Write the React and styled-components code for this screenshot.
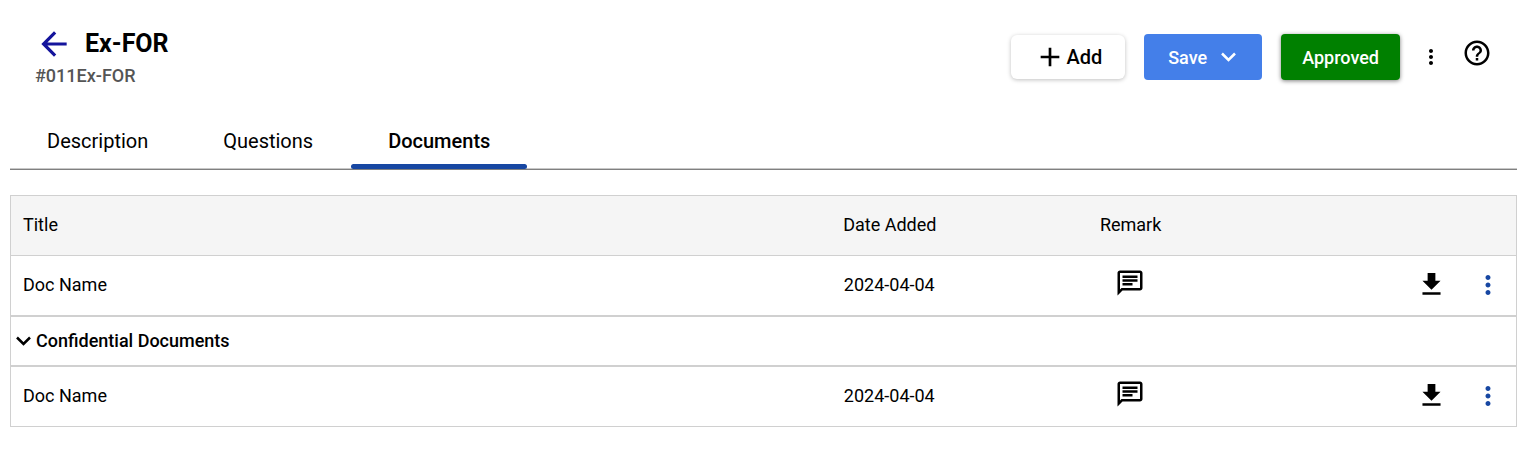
import { useState } from "react";
import styled, { createGlobalStyle } from "styled-components";
import {
  MdAdd,
  MdArrowBack,
  MdDownload,
  MdHelpOutline,
  MdMoreVert,
  MdOutlineChat,
} from "react-icons/md";

const GlobalStyle = createGlobalStyle`
  * {
    box-sizing: border-box;
  }
  body {
    margin: 0;
    background-color: #fff;
    color: #000;
    font-family: Roboto, "Liberation Sans", sans-serif;
  }
  button {
    font-family: inherit;
    color: inherit;
    cursor: pointer;
  }
`;

const Page = styled.main`
  padding: 25px 9px 0 10px;
`;

const Header = styled.header`
  display: flex;
  justify-content: space-between;
  align-items: flex-start;
  padding: 0 25px;
`;

const TitleRow = styled.div`
  display: flex;
  align-items: center;
  gap: 12px;
`;

const Title = styled.h1`
  margin: 0;
  font-size: 25px;
  font-weight: 700;
  line-height: 36px;
`;

const Code = styled.p`
  margin: 3px 0 0;
  color: #555;
  font-size: 18px;
  font-weight: 500;
  line-height: 20px;
`;

const IconButton = styled.button`
  display: inline-flex;
  align-items: center;
  justify-content: center;
  border: none;
  padding: 0;
  background: none;
  color: ${({ $color }) => $color || "#000"};
  font-size: ${({ $size }) => $size}px;
`;

const Actions = styled.div`
  display: flex;
  align-items: center;
  gap: 19px;
  padding-top: 9px;
`;

const Button = styled.button`
  display: flex;
  align-items: center;
  justify-content: center;
  height: 46px;
  padding: 0 21px;
  border: none;
  border-radius: 4px;
  font-size: 18px;
  font-weight: 500;
`;

const AddButton = styled(Button)`
  height: 44px;
  padding: 0 23px;
  border-radius: 6px;
  background-color: #fff;
  font-size: 20px;
  box-shadow: 0 1px 4px rgba(0, 0, 0, 0.25);
`;

const SaveButton = styled(Button)`
  gap: 14px;
  padding: 0 26px 0 24px;
  background-color: #447fe9;
  color: #fff;
`;

const ApprovedButton = styled(Button)`
  background-color: #008000;
  color: #fff;
  box-shadow: 0 1px 4px rgba(0, 0, 0, 0.5);
`;

const HelpButton = styled(IconButton)`
  margin-bottom: 8px;
`;

const Tabs = styled.nav`
  display: flex;
  gap: 1px;
  margin-top: 27px;
  border-bottom: 1px solid #808080;
  box-shadow: inset 0 -1px #c8c8c8;
`;

const Tab = styled.button`
  position: relative;
  height: 56px;
  padding: 0 37px;
  border: none;
  background: none;
  font-size: 20px;
  font-weight: ${({ $active }) => ($active ? 500 : 400)};

  &::after {
    content: "";
    display: ${({ $active }) => ($active ? "block" : "none")};
    position: absolute;
    left: 0;
    right: 0;
    bottom: 0;
    height: 5px;
    border-radius: 3px;
    background-color: #1747a2;
  }
`;

const Table = styled.table`
  width: 100%;
  margin-top: 25px;
  border: 1px solid #d0d0d0;
  border-spacing: 0;
  table-layout: fixed;
  font-size: 18px;
`;

const HeadCell = styled.th`
  width: ${({ $width }) => $width || "auto"};
  height: 60px;
  padding: 0 12px 2px;
  border-bottom: 1px solid #d0d0d0;
  background-color: #f5f5f5;
  font-weight: 400;
  text-align: ${({ $align }) => $align || "left"};
`;

const Cell = styled.td`
  height: 59px;
  padding: 0 13px 2px 12px;
  text-align: ${({ $align }) => $align || "left"};
`;

const GroupCell = styled.td`
  height: 52px;
  padding: 0 5px 1px;
  border-top: 2px solid #d0d0d0;
  border-bottom: 2px solid #d0d0d0;
`;

const GroupToggle = styled.button`
  display: flex;
  align-items: center;
  gap: 5px;
  padding: 0;
  border: none;
  background: none;
  font-size: 18px;
  font-weight: 500;

  svg {
    transform: ${({ $open }) => ($open ? "none" : "rotate(-90deg)")};
  }
`;

const RowActions = styled.div`
  display: flex;
  justify-content: flex-end;
  gap: 26px;
`;

const tabs = ["Description", "Questions", "Documents"];

const documents = [{ id: 1, title: "Doc Name", date: "2024-04-04" }];

const confidentialDocuments = [
  { id: 2, title: "Doc Name", date: "2024-04-04" },
];

const Chevron = () => {
  return (
    <svg width="15" height="10" viewBox="0 0 15 10" aria-hidden="true">
      <path
        d="M1 1.5 7.5 8 14 1.5"
        fill="none"
        stroke="currentColor"
        strokeWidth="2.5"
      />
    </svg>
  );
};

const DocumentRow = ({ item }) => {
  return (
    <tr>
      <Cell>{item.title}</Cell>
      <Cell $align="center">{item.date}</Cell>
      <Cell $align="center">
        <IconButton $size={30} aria-label="Remark">
          <MdOutlineChat />
        </IconButton>
      </Cell>
      <Cell>
        <RowActions>
          <IconButton $size={31} aria-label="Download">
            <MdDownload />
          </IconButton>
          <IconButton $size={30} $color="#1747a2" aria-label="More options">
            <MdMoreVert />
          </IconButton>
        </RowActions>
      </Cell>
    </tr>
  );
};

const App = () => {
  const [activeTab, setActiveTab] = useState("Documents");
  const [open, setOpen] = useState(true);

  return (
    <>
      <GlobalStyle />
      <Page>
        <Header>
          <div>
            <TitleRow>
              <IconButton $size={38} $color="#14149c" aria-label="Back">
                <MdArrowBack />
              </IconButton>
              <Title>Ex-FOR</Title>
            </TitleRow>
            <Code>#011Ex-FOR</Code>
          </div>
          <Actions>
            <AddButton>
              <MdAdd size={32} />
              Add
            </AddButton>
            <SaveButton>
              Save
              <Chevron />
            </SaveButton>
            <ApprovedButton>Approved</ApprovedButton>
            <IconButton $size={24} aria-label="More">
              <MdMoreVert />
            </IconButton>
            <HelpButton $size={30} aria-label="Help">
              <MdHelpOutline />
            </HelpButton>
          </Actions>
        </Header>
        <Tabs>
          {tabs.map((tab) => (
            <Tab
              key={tab}
              $active={tab === activeTab}
              onClick={() => setActiveTab(tab)}
            >
              {tab}
            </Tab>
          ))}
        </Tabs>
        <Table>
          <thead>
            <tr>
              <HeadCell>Title</HeadCell>
              <HeadCell $width="16%" $align="center">
                Date Added
              </HeadCell>
              <HeadCell $width="16%" $align="center">
                Remark
              </HeadCell>
              <HeadCell $width="265px" aria-label="Actions" />
            </tr>
          </thead>
          <tbody>
            {documents.map((item) => (
              <DocumentRow key={item.id} item={item} />
            ))}
            <tr>
              <GroupCell colSpan={4}>
                <GroupToggle
                  $open={open}
                  aria-expanded={open}
                  onClick={() => setOpen(!open)}
                >
                  <Chevron />
                  Confidential Documents
                </GroupToggle>
              </GroupCell>
            </tr>
            {open &&
              confidentialDocuments.map((item) => (
                <DocumentRow key={item.id} item={item} />
              ))}
          </tbody>
        </Table>
      </Page>
    </>
  );
};

export default App;
